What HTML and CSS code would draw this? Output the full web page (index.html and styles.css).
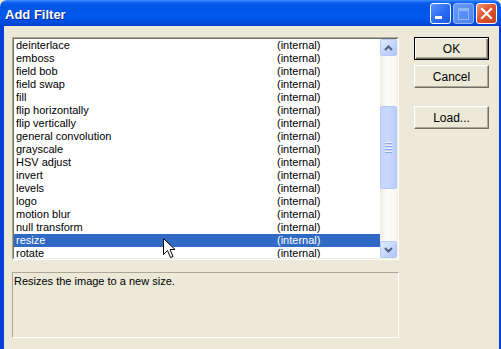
FILE: index.html
```html
<!DOCTYPE html>
<html lang="en">
<head>
    <meta charset="UTF-8">
    <title>Add Filter</title>
    <link rel="stylesheet" href="styles.css">
</head>
<body>
    <div class="window">
        <div class="titlebar">
            <span class="title">Add Filter</span>
            <div class="caption-buttons">
                <div class="cap-btn cap-min"><span class="min-bar"></span></div>
                <div class="cap-btn cap-max"><span class="max-box"></span></div>
                <div class="cap-btn cap-close">
                    <svg width="13" height="13" viewBox="0 0 13 13">
                        <path d="M2 2 L11 11 M11 2 L2 11" stroke="#fff" stroke-width="2.2" stroke-linecap="square"/>
                    </svg>
                </div>
            </div>
        </div>

        <div class="frame">
            <div class="client">
                <div class="main">
                    <div class="listbox">
                        <div class="listbox-inner">
                            <div class="rows">
                                <div class="row"><span class="name">deinterlace</span><span>(internal)</span></div>
                                <div class="row"><span class="name">emboss</span><span>(internal)</span></div>
                                <div class="row"><span class="name">field bob</span><span>(internal)</span></div>
                                <div class="row"><span class="name">field swap</span><span>(internal)</span></div>
                                <div class="row"><span class="name">fill</span><span>(internal)</span></div>
                                <div class="row"><span class="name">flip horizontally</span><span>(internal)</span></div>
                                <div class="row"><span class="name">flip vertically</span><span>(internal)</span></div>
                                <div class="row"><span class="name">general convolution</span><span>(internal)</span></div>
                                <div class="row"><span class="name">grayscale</span><span>(internal)</span></div>
                                <div class="row"><span class="name">HSV adjust</span><span>(internal)</span></div>
                                <div class="row"><span class="name">invert</span><span>(internal)</span></div>
                                <div class="row"><span class="name">levels</span><span>(internal)</span></div>
                                <div class="row"><span class="name">logo</span><span>(internal)</span></div>
                                <div class="row"><span class="name">motion blur</span><span>(internal)</span></div>
                                <div class="row"><span class="name">null transform</span><span>(internal)</span></div>
                                <div class="row selected"><span class="name">resize</span><span>(internal)</span></div>
                                <div class="row"><span class="name">rotate</span><span>(internal)</span></div>
                            </div>
                            <div class="scrollbar">
                                <div class="sb-btn">
                                    <svg width="9" height="6" viewBox="0 0 9 6"><path d="M1 5 L4.5 1.5 L8 5" fill="none" stroke="#4d6185" stroke-width="2"/></svg>
                                </div>
                                <div class="sb-track">
                                    <div class="sb-thumb">
                                        <span class="grip"></span>
                                        <span class="grip"></span>
                                        <span class="grip"></span>
                                        <span class="grip"></span>
                                    </div>
                                </div>
                                <div class="sb-btn">
                                    <svg width="9" height="6" viewBox="0 0 9 6"><path d="M1 1 L4.5 4.5 L8 1" fill="none" stroke="#4d6185" stroke-width="2"/></svg>
                                </div>
                            </div>
                        </div>
                    </div>
                    <div class="description">Resizes the image to a new size.</div>
                </div>

                <div class="buttons">
                    <div class="btn default">OK</div>
                    <div class="btn">Cancel</div>
                    <div class="btn load">Load...</div>
                </div>
            </div>
        </div>

        <svg class="cursor" width="13" height="21" viewBox="0 0 13 21">
            <path d="M0.5 0.5 L0.5 16.5 L4.5 12.5 L7.5 19.5 L10 18.5 L7 11.5 L12 11.5 Z" fill="#fff" stroke="#000" stroke-width="1"/>
        </svg>
    </div>
</body>
</html>
```

FILE: styles.css
```css
body {
    margin: 0;
    background-color: #ece9d8;
    font-family: "Liberation Sans", Arial, sans-serif;
    font-size: 11px;
}
.window {
    position: relative;
    width: 501px;
    height: 349px;
    overflow: hidden;
    display: flex;
    flex-direction: column;
}
.titlebar {
    height: 26px;
    flex-shrink: 0;
    display: flex;
    align-items: flex-start;
    justify-content: space-between;
    background: linear-gradient(#3d8dff 0, #0a5df0 3px, #0055e5 7px, #0058ee 17px, #004bdc 23px, #0040cc 26px);
    border-radius: 7px 7px 0 0;
}
.title {
    color: white;
    font-weight: bold;
    font-size: 13px;
    padding: 7px 0 0 5px;
    text-shadow: 1px 1px #10268a;
}
.caption-buttons {
    display: flex;
    gap: 2px;
    padding: 3px 4px 0 0;
}
.cap-btn {
    width: 21px;
    height: 21px;
    box-sizing: border-box;
    border: 1px solid #fff;
    border-radius: 3px;
    display: flex;
    align-items: center;
    justify-content: center;
    background: linear-gradient(135deg, #5e96ff 0%, #2a6cf0 55%, #1a55e0 100%);
}
.cap-min {
    align-items: flex-end;
    justify-content: flex-start;
}
.min-bar {
    width: 7px;
    height: 3px;
    background-color: white;
    margin: 0 0 4px 4px;
}
.cap-max {
    border-color: #8fb4f7;
    background: linear-gradient(135deg, #6a9dfa 0%, #4a82f0 100%);
}
.max-box {
    width: 9px;
    height: 8px;
    border: 1px solid #8fb4f7;
    border-top-width: 3px;
}
.cap-close {
    background: linear-gradient(135deg, #f09a7a 0%, #e0552e 45%, #c7401c 100%);
}
.frame {
    flex: 1;
    border-left: 4px solid #0740d8;
    border-right: 2px solid #0740d8;
    background-color: #ece9d8;
}
.client {
    display: flex;
    gap: 15px;
    padding: 11px 0 0 8px;
}
.main {
    width: 387px;
    display: flex;
    flex-direction: column;
    gap: 12px;
}
.listbox {
    height: 223px;
    box-sizing: border-box;
    border: 1px solid;
    border-color: #aca899 #ffffff #ffffff #aca899;
}
.listbox-inner {
    height: 100%;
    box-sizing: border-box;
    border: 1px solid;
    border-color: #716f64 #f1efe2 #f1efe2 #716f64;
    display: flex;
    background-color: white;
}
.rows {
    flex: 1;
    overflow: hidden;
}
.row {
    display: grid;
    grid-template-columns: 263px 1fr;
    height: 13px;
    line-height: 13px;
    color: black;
    white-space: nowrap;
}
.row .name {
    padding-left: 2px;
}
.row.selected {
    background-color: #316ac5;
    color: white;
}
.scrollbar {
    width: 17px;
    display: flex;
    flex-direction: column;
    background: linear-gradient(to right, #eeede5, #fdfdfa 40%, #f7f6f2);
}
.sb-btn {
    height: 17px;
    box-sizing: border-box;
    border: 1px solid #b7caf5;
    border-radius: 2px;
    background: linear-gradient(135deg, #e2ebfd, #c1d3fb 60%, #b0c6f7);
    display: flex;
    align-items: center;
    justify-content: center;
}
.sb-track {
    flex: 1;
}
.sb-thumb {
    margin-top: 50px;
    height: 83px;
    box-sizing: border-box;
    border: 1px solid #b4c8f6;
    border-radius: 2px;
    background: linear-gradient(to right, #c6d5fc, #c9d8fc 50%, #b9cbf9);
    display: flex;
    flex-direction: column;
    align-items: center;
    justify-content: center;
    gap: 1px;
}
.grip {
    width: 7px;
    height: 1px;
    background-color: #eef3fe;
    border-bottom: 1px solid #8ca8e8;
}
.description {
    height: 66px;
    box-sizing: border-box;
    border: 1px solid;
    border-color: #aca899 #ffffff #ffffff #aca899;
    padding: 2px 0 0 1px;
    line-height: 13px;
    color: black;
}
.buttons {
    width: 75px;
    display: flex;
    flex-direction: column;
    gap: 5px;
}
.btn {
    height: 23px;
    box-sizing: border-box;
    border: 1px solid;
    border-color: #ffffff #716f64 #716f64 #ffffff;
    box-shadow: inset -1px -1px #aca899, inset 1px 1px #f1efe2;
    display: flex;
    align-items: center;
    justify-content: center;
    font-size: 12px;
    color: black;
}
.btn.default {
    border-color: #000;
    box-shadow: inset 1px 1px #fff, inset -1px -1px #716f64, inset -2px -2px #aca899;
}
.btn.load {
    margin-top: 13px;
}
.cursor {
    position: absolute;
    left: 163px;
    top: 238px;
}
```
